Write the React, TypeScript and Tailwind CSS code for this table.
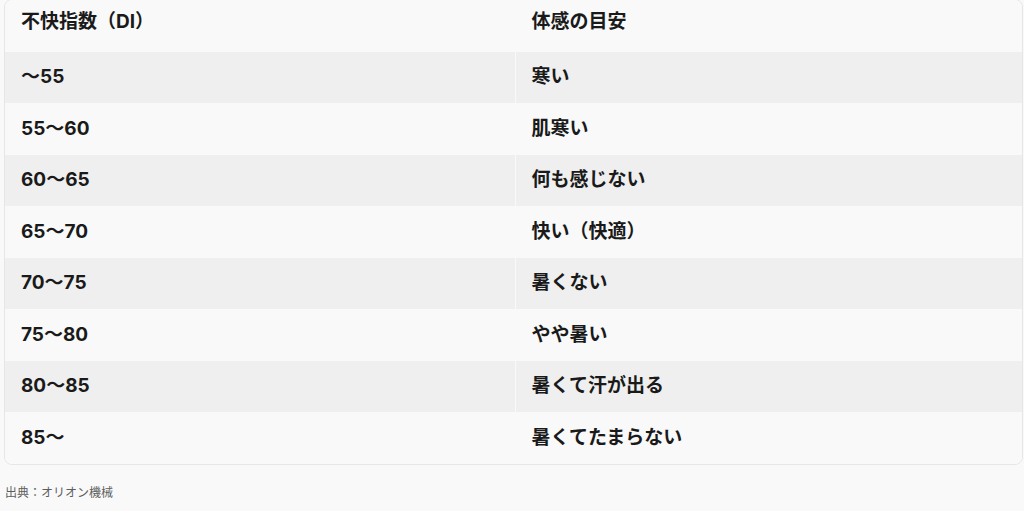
const rows: [string, string][] = [
  ["〜55", "寒い"],
  ["55〜60", "肌寒い"],
  ["60〜65", "何も感じない"],
  ["65〜70", "快い（快適）"],
  ["70〜75", "暑くない"],
  ["75〜80", "やや暑い"],
  ["80〜85", "暑くて汗が出る"],
  ["85〜", "暑くてたまらない"],
];

export default function App() {
  return (
    <div
      className="min-h-[511px] w-[1024px] overflow-hidden bg-[#f9f9f9] text-[#1a1a1a]"
      style={{ fontFamily: 'Inter, "Noto Sans CJK JP", sans-serif' }}
    >
      <div className="ml-[4px] mr-[1px] -mt-[1px] overflow-hidden rounded-lg border border-[#e6e6e6]">
        <table className="w-full border-collapse text-[19px] font-bold">
          <thead>
            <tr className="h-[51.5px] bg-[#f9f9f9]">
              <th className="w-[510px] border-r border-[#f9f9f9] pb-[8px] pl-[16px] text-left font-bold">
                不快指数（DI）
              </th>
              <th className="pb-[8px] pl-[16px] text-left font-bold">体感の目安</th>
            </tr>
          </thead>
          <tbody>
            {rows.map(([di, feel], i) => (
              <tr
                key={di}
                className={`h-[51.5px] ${i % 2 === 0 ? "bg-[#efefef]" : "bg-[#f9f9f9]"}`}
              >
                <td className="border-r border-[#f9f9f9] pl-[16px]">{di}</td>
                <td className="pl-[16px]">{feel}</td>
              </tr>
            ))}
          </tbody>
        </table>
      </div>
      <p
        className="mt-[18px] pl-[5px] text-[12px] text-[#5d5d5d]"
        style={{ fontFamily: '"Noto Sans CJK JP", sans-serif' }}
      >
        出典：オリオン機械
      </p>
    </div>
  );
}
